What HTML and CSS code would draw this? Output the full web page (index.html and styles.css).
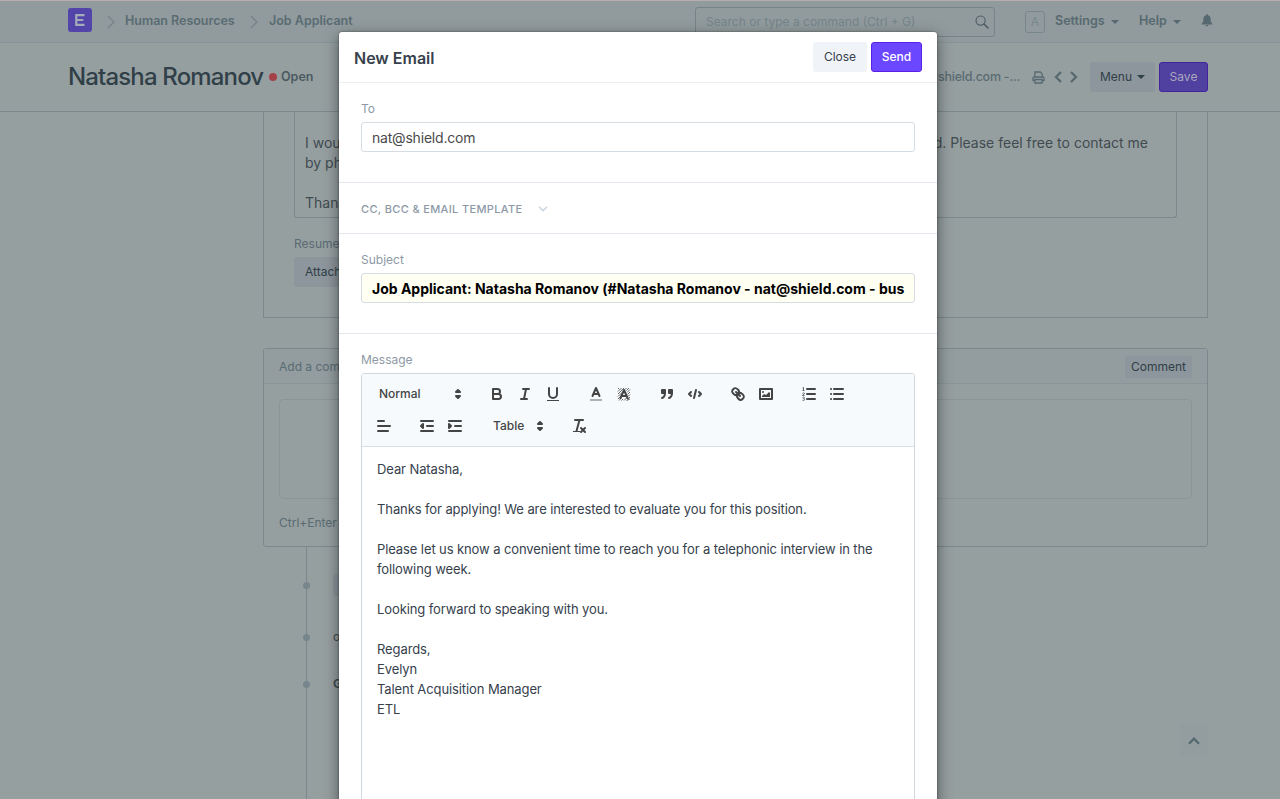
FILE: index.html
```html
<!DOCTYPE html>
<html lang="en">
<head>
<meta charset="utf-8">
<title>New Email</title>
<link rel="stylesheet" href="styles.css">
</head>
<body>
<div class="page">
  <header class="topbar">
    <div class="container topbar-row">
      <svg class="logo" viewBox="0 0 24 24"><rect width="24" height="24" rx="3" fill="#5244a8"/><path d="M16.500 7.200H8.300v9.600h8.200M8.300 12h7" fill="none" stroke="#a4abb8" stroke-width="2.200"/></svg>
      <svg class="crumb-sep" viewBox="0 0 8 14"><path d="M1 1l6 6-6 6" fill="none" stroke="#758489" stroke-width="1.4"/></svg>
      <span class="crumb crumb-first">Human Resources</span>
      <svg class="crumb-sep crumb-sep-next" viewBox="0 0 8 14"><path d="M1 1l6 6-6 6" fill="none" stroke="#758489" stroke-width="1.4"/></svg>
      <span class="crumb crumb-second">Job Applicant</span>
      <div class="search"><span>Search or type a command (Ctrl + G)</span>
        <svg viewBox="0 0 14 14"><circle cx="5.6" cy="5.6" r="4.6" fill="none" stroke="#4b5b63" stroke-width="1.1"/><path d="M9 9l4 4" stroke="#4b5b63" stroke-width="1.6" stroke-linecap="round"/></svg>
      </div>
      <span class="avatar">A</span>
      <span class="nav-item settings">Settings</span><i class="caret"></i>
      <span class="nav-item help">Help</span><i class="caret"></i>
      <svg class="bell" viewBox="0 0 12 13"><path d="M6 .3c.6 0 1 .4 1 .9 1.7.4 2.6 1.700 2.6 3.500 0 2.700.6 4 1.900 5.100v.6H.5v-.6C1.800 8.700 2.400 7.400 2.400 4.700c0-1.800.9-3.100 2.600-3.500 0-.5.400-.9 1-.9zM4.600 11h2.800c0 .8-.6 1.400-1.400 1.400S4.600 11.800 4.600 11z" fill="#566970"/></svg>
    </div>
  </header>
  <div class="page-head">
    <div class="container head-row">
      <h1 class="title">Natasha Romanov</h1><i class="status-dot"></i><span class="status">Open</span>
      <span class="doc-name">shield.com -...</span>
      <svg class="printer" viewBox="0 0 13 13"><path d="M2.900 6V1h5.400l1.900 1.900V6M2.900 9.500H1V7.200Q1 6 2.200 6h8.600Q12 6 12 7.200v2.300h-1.900M2.900 8.500h7.200V12H2.900z" fill="none" stroke="#566970" stroke-width="1.300"/></svg>
      <svg class="arrow arrow-left" viewBox="0 0 8 12"><path d="M7 1L2 6l5 5" fill="none" stroke="#566970" stroke-width="2.300"/></svg>
      <svg class="arrow arrow-right" viewBox="0 0 8 12"><path d="M1 1l5 5-5 5" fill="none" stroke="#566970" stroke-width="2.300"/></svg>
      <span class="menu-btn">Menu<i class="caret caret-dark"></i></span>
      <span class="save-btn">Save</span>
    </div>
  </div>
  <main class="content">
    <section class="form-box">
      <div class="letter">
        <div class="letter-line"><span>I would</span><span>mind. Please feel free to contact me</span></div>
        <div>by pho</div>
        <div class="blank"></div>
        <div>Thank</div>
      </div>
      <div class="resume-label">Resume</div>
      <span class="attach-btn">Attach</span>
    </section>
    <section class="comment-box">
      <div class="comment-head"><span>Add a comm</span><span class="comment-btn">Comment</span></div>
      <div class="comment-input"></div>
      <div class="comment-hint">Ctrl+Enter</div>
    </section>
    <section class="timeline">
      <div class="event event-chip"><i class="dot"></i><span class="chip"></span></div>
      <div class="event event-icon"><i class="dot"></i><span>o</span></div>
      <div class="event event-name"><i class="dot"></i><b>G</b></div>
    </section>
  </main>
  <span class="to-top"><svg viewBox="0 0 12 8"><path d="M1 6.700l5-5 5 5" fill="none" stroke="#566970" stroke-width="2.300"/></svg></span>
</div>

<div class="modal">
  <div class="modal-head"><h2>New Email</h2><span class="close-btn">Close</span><span class="send-btn">Send</span></div>
  <div class="section section-to">
    <div class="label">To</div>
    <div class="input input-to">nat@shield.com</div>
  </div>
  <div class="section section-cc">CC, BCC &amp; EMAIL TEMPLATE<svg viewBox="0 0 10 6"><path d="M1 .8l4 4 4-4" fill="none" stroke="#c8d3de" stroke-width="1.400"/></svg></div>
  <div class="section section-subject">
    <div class="label">Subject</div>
    <div class="input input-subject">Job Applicant: Natasha Romanov (#Natasha Romanov - nat@shield.com - bus</div>
  </div>
  <div class="section-message">
    <div class="label">Message</div>
    <div class="editor">
      <div class="toolbar">
        <div class="tools">
          <span class="picker picker-format">Normal<svg class="ic" viewBox="0 0 18 18"><path class="fs" d="M7 11l2 2 2-2zM7 7l2-2 2 2z"/></svg></span>
          <svg class="ic" viewBox="0 0 18 18"><path class="st" d="M5 4h4.500a2.500 2.500 0 0 1 0 5H5zM5 9h5.500a2.500 2.500 0 0 1 0 5H5z"/></svg>
          <svg class="ic" viewBox="0 0 18 18"><path class="st" d="M7 4h6M5 14h6M8 14l2-10"/></svg>
          <svg class="ic gap" viewBox="0 0 18 18"><path class="st" d="M5 3v6a4 4 0 0 0 8 0V3"/><rect class="fi" x="3" y="15" width="12" height="1"/></svg>
          <svg class="ic" viewBox="0 0 18 18"><path class="soft" d="M3 15h12"/><path class="st" d="M5.500 11L9 3l3.500 8M11.600 9H6.400"/></svg>
          <svg class="ic gap" viewBox="0 0 18 18"><path class="hatch" d="M3 4l1-1M3 6.500L6.500 3M3 9l6-6M3 11.500L7 7.500M3 14l3-3M4 15.500l2-2M6.500 15.500L8 14M11.500 3L10 4.500M14 3l-2.500 2.500M15 4.500l-3 3M15 7l-2.500 2.500M15 9.500l-2 2M15 12l-2.500 2.500M9 15.500l3-3M11.500 15.500L15 14"/><path class="st" d="M5.500 13L9 5l3.500 8M11.600 11H6.400"/></svg>
          <svg class="ic" viewBox="0 0 18 18"><path class="fs" d="M4 5h3v3H4zM11 5h3v3h-3z"/><path class="st" d="M7 8c0 4.031-3 5-3 5M14 8c0 4.031-3 5-3 5"/></svg>
          <svg class="ic gap" viewBox="0 0 18 18"><path class="st" d="M5 7L3 9l2 2M13 7l2 2-2 2M10 5l-2 8"/></svg>
          <svg class="ic" viewBox="0 0 18 18"><path class="st" d="M7 7l4 4M8.900 4.577a3.476 3.476 0 0 1 .360 4.679A3.476 3.476 0 0 1 4.577 8.900C3.185 7.500 2.035 6.400 4.217 4.217S7.500 3.185 8.900 4.577zM13.423 9.100a3.476 3.476 0 0 0-4.679-.360 3.476 3.476 0 0 0 .360 4.679c1.392 1.392 2.500 2.542 4.679.360s1.032-3.287-.360-4.679z"/></svg>
          <svg class="ic gap" viewBox="0 0 18 18"><path class="st" d="M3 4h12v10H3z"/><circle class="fi" cx="6" cy="7" r="1"/><path class="fi" d="M5 12v-1l2-2 2 1 3-3 1 1v4z"/></svg>
          <svg class="ic" viewBox="0 0 18 18"><path class="st" d="M7 4h8M7 9h8M7 14h8"/><path class="thin" d="M2.500 5.500h2M3.500 5.500v-3l-1 .5M4.500 10.500h-2c0-1 2-1 2-2 0-.8-1.600-.8-2 0M2.500 12.500c1-.6 2-.3 2 .4s-.9.8-1 .8c1 0 1.200.5 1 1.200s-1.400.8-2 .2"/></svg>
          <svg class="ic" viewBox="0 0 18 18"><path class="st" d="M6 4h9M6 9h9M6 14h9M3 4h.100M3 9h.100M3 14h.100"/></svg>
        </div>
        <div class="tools">
          <svg class="ic gap" viewBox="0 0 18 18"><path class="st" d="M3 9h12M3 14h10M3 4h6"/></svg>
          <svg class="ic" viewBox="0 0 18 18"><path class="st" d="M3 14h12M3 4h12M9 9h6"/><path class="fs" d="M5 7v4L3 9z"/></svg>
          <svg class="ic gap" viewBox="0 0 18 18"><path class="st" d="M3 14h12M3 4h12M9 9h6"/><path class="fs" d="M3 7v4l2-2z"/></svg>
          <span class="picker picker-table">Table<svg class="ic" viewBox="0 0 18 18"><path class="fs" d="M7 11l2 2 2-2zM7 7l2-2 2 2z"/></svg></span>
          <svg class="ic" viewBox="0 0 18 18"><path class="st" d="M5 3h8M6.500 14l3-11M11 11l4 4M15 11l-4 4"/><rect class="fi" x="3" y="14" width="7" height="1"/></svg>
        </div>
      </div>
      <div class="message">
        <p>Dear Natasha,</p>
        <p>Thanks for applying! We are interested to evaluate you for this position.</p>
        <p>Please let us know a convenient time to reach you for a telephonic interview in the<br>following week.</p>
        <p>Looking forward to speaking with you.</p>
        <p>Regards,<br>Evelyn<br>Talent Acquisition Manager<br>ETL</p>
      </div>
    </div>
  </div>
</div>
</body>
</html>
```

FILE: styles.css
```css
* { box-sizing: border-box; }
html, body { height: 100%; overflow: hidden; }
body { margin: 0; font: 12px/20px Inter, "Liberation Sans", sans-serif; color: #36414c; }
svg { display: block; flex: none; }
h1, h2, p { margin: 0; }

.page { height: 799px; background: #969fa0; overflow: hidden; position: relative; }
.container { width: 1140px; margin-left: 68px; display: flex; align-items: center; }
.topbar { height: 43px; background: #919b9d; border-top: 1px solid #b5adaf; border-bottom: 1px solid #859496; }
.topbar-row { height: 38px; }
.logo { width: 24px; height: 24px; }
.crumb-sep { width: 8px; height: 14px; margin: 3px 0 0 15px; }
.crumb-sep-next { margin-left: 15px; }
.crumb { font-size: 12.5px; font-weight: 600; color: #596b73; white-space: nowrap; margin-top: 2px; }
.crumb-first { width: 110px; margin-left: 10px; letter-spacing: -.02px; }
.crumb-second { width: 84px; margin-left: 11px; }
.search { width: 300px; height: 30px; margin: 3px 0 0 auto; border: 1px solid #758489; border-radius: 3px; display: flex; align-items: center; justify-content: space-between; padding: 0 5px 0 10px; color: #74848a; font-size: 12px; }
.search svg { width: 14px; height: 14px; }
.avatar { width: 20px; height: 22px; margin: 3px 0 0 30px; border: 1px solid #77878c; border-radius: 3px; text-align: center; font-size: 12px; color: #77878c; }
.nav-item { font-size: 12.5px; font-weight: 600; color: #566970; white-space: nowrap; margin-top: 1px; }
.settings { width: 51px; margin-left: 10px; }
.help { width: 29px; margin-left: 20px; }
.caret { flex: none; border: 4px solid transparent; border-top-color: #566970; border-bottom: 0; margin: 3px 0 0 5px; }
.bell { width: 12px; height: 13px; margin: 1px -5px 0 20px; }

.page-head { height: 69px; border-bottom: 1px solid #7b898c; }
.head-row { height: 68px; }
.title { font-size: 24px; font-weight: 500; color: #303f48; width: 194px; letter-spacing: -.85px; white-space: nowrap; }
.status-dot { width: 8px; height: 8px; border-radius: 50%; background: #a44249; margin-left: 7px; }
.status { font-size: 12.5px; font-weight: 600; color: #4a5a61; margin-left: 4px; }
.doc-name { margin-left: auto; width: 82px; font-size: 12.5px; font-weight: 500; letter-spacing: -.25px; color: #596b73; white-space: nowrap; }
.printer { width: 13px; height: 13px; margin-left: 12px; }
.arrow { width: 8px; height: 12px; margin-left: 6px; }
.arrow-left { margin-left: 9px; }
.arrow-right { margin-left: 8px; }
.menu-btn { width: 65px; height: 30px; margin-left: 12px; background: #8d969c; border-radius: 3px; display: flex; align-items: center; justify-content: center; color: #303f48; font-size: 12px; }
.caret-dark { border-top-color: #303f48; margin-top: 0; }
.save-btn { width: 49px; height: 30px; margin-left: 4px; background: #5040a0; border: 1px solid #42249f; border-radius: 3px; color: #a9a9bd; text-align: center; line-height: 28px; font-size: 12px; }

.content { margin-left: 263px; width: 945px; }
.form-box { height: 206px; padding: 0 30px; border: 1px solid #7b898c; border-top: 0; }
.letter { height: 106px; width: 883px; padding: 21px 10px 0; border: 1px solid #7b898c; border-top: 0; border-radius: 0 0 3px 3px; font-size: 14px; color: #414b50; }
.letter-line { display: flex; justify-content: space-between; padding-right: 18px; }
.blank { height: 20px; }
.resume-label { margin-top: 16px; color: #596b73; }
.attach-btn { display: block; width: 61px; height: 30px; margin-top: 3px; padding-left: 11px; background: #8d969c; border-radius: 3px; color: #303f48; line-height: 30px; }
.comment-box { height: 199px; margin-top: 30px; border: 1px solid #7b898c; border-radius: 3px; color: #596b73; }
.comment-head { height: 35px; padding: 2px 15px 0; display: flex; justify-content: space-between; align-items: center; background: #939d9f; border-bottom: 1px solid #899698; }
.comment-btn { width: 67px; height: 22px; background: #8d969c; border-radius: 3px; text-align: center; line-height: 22px; color: #303f48; }
.comment-input { height: 100px; margin: 15px 15px 0; border: 1px solid #899698; border-radius: 4px; }
.comment-hint { margin: 14px 15px 0; }
.timeline { margin-left: 43px; height: 252px; border-left: 1px solid #7b898c; padding-top: 27px; }
.event { display: flex; align-items: center; height: 22px; margin-left: -4px; color: #414b50; font-size: 12px; }
.event-icon { margin-top: 30px; }
.event-name { margin-top: 25px; }
.dot { width: 7px; height: 7px; border-radius: 50%; background: #77868d; }
.event span, .event b { margin-left: 23px; }
.event .chip { width: 10px; height: 22px; border-radius: 3px; background: #8d969c; }
.to-top { position: absolute; left: 1180px; top: 723px; width: 28px; height: 34px; background: #939d9f; border-radius: 3px; display: flex; align-items: center; justify-content: center; padding-top: 2px; }
.to-top svg { width: 12px; height: 8px; }

.modal { position: absolute; left: 339px; top: 32px; width: 598px; height: 790px; background: #fff; border-radius: 3px; box-shadow: 0 5px 15px rgba(0, 0, 0, .5), 0 0 2px rgba(0, 0, 0, .5); }
.modal-head { height: 51px; padding: 0 15px; display: flex; align-items: center; border-bottom: 1px solid #ebeff2; }
.modal-head h2 { font-size: 16px; font-weight: 600; color: #36414c; margin: 2px auto 0 0; }
.close-btn, .send-btn { height: 30px; border-radius: 3px; text-align: center; font-size: 12px; line-height: 30px; }
.close-btn { width: 54px; background: #f0f4f8; color: #36414c; }
.send-btn { width: 51px; margin-left: 4px; background: #6b48ff; border: 1px solid #5a20e8; color: #fff; line-height: 28px; font-weight: 500; }
.section { border-bottom: 1px solid #e2e7ee; padding: 0 22px; }
.label { color: #8d99a6; font-size: 12px; line-height: 20px; }
.input { height: 30px; margin-top: 3px; border: 1px solid #d5dde4; border-radius: 3px; padding: 0 10px; font-size: 14px; line-height: 29px; color: #4a4a4a; white-space: nowrap; }
.section-to { height: 100px; padding-top: 16px; }
.input-to { letter-spacing: -.2px; }
.section-cc { height: 51px; display: flex; align-items: center; color: #8d99a6; font-size: 11px; font-weight: 500; letter-spacing: .35px; padding-top: 2px; }
.section-cc svg { width: 10px; height: 6px; margin-left: 15px; }
.section-subject { height: 100px; padding-top: 16px; }
.input-subject { background: #fffff2; color: #000; font-weight: 700; }
.section-message { padding: 16px 22px 0; }
.editor { height: 440px; margin-top: 3px; border: 1px solid #d1d8dd; border-radius: 3px 3px 0 0; }
.toolbar { height: 73px; padding: 4px 7px; background: #f7fafc; border-bottom: 1px solid #d9e0e5; }
.tools { display: flex; align-items: center; height: 32px; }
.ic { width: 28px; height: 18px; padding: 0 5px; }
.ic.gap { margin-right: 15px; }
.tools > .ic:first-child { margin-left: 1px; }
.st, .fs { stroke: #444; stroke-width: 2; stroke-linecap: round; stroke-linejoin: round; fill: none; }
.fs { fill: #444; }
.fi { fill: #444; }
.thin { fill: none; stroke: #444; stroke-width: .8; }
.hatch { fill: none; stroke: #444; stroke-width: .8; }
.soft { stroke: #444; stroke-width: 2; opacity: .4; }
.picker { display: flex; align-items: center; justify-content: space-between; font-size: 12px; font-weight: 500; color: #444; }
.picker-format { width: 98px; padding-left: 10px; margin-right: 16px; }
.picker-format .ic { margin-right: -5px; }
.picker-table { width: 66px; padding-left: 9px; margin-right: 15px; }
.picker-table .ic { margin-right: -4px; }
.message { padding: 12px 15px; font-size: 13px; line-height: 20px; letter-spacing: -.1px; color: #36414c; white-space: nowrap; }
.message p + p { margin-top: 20px; }
```
